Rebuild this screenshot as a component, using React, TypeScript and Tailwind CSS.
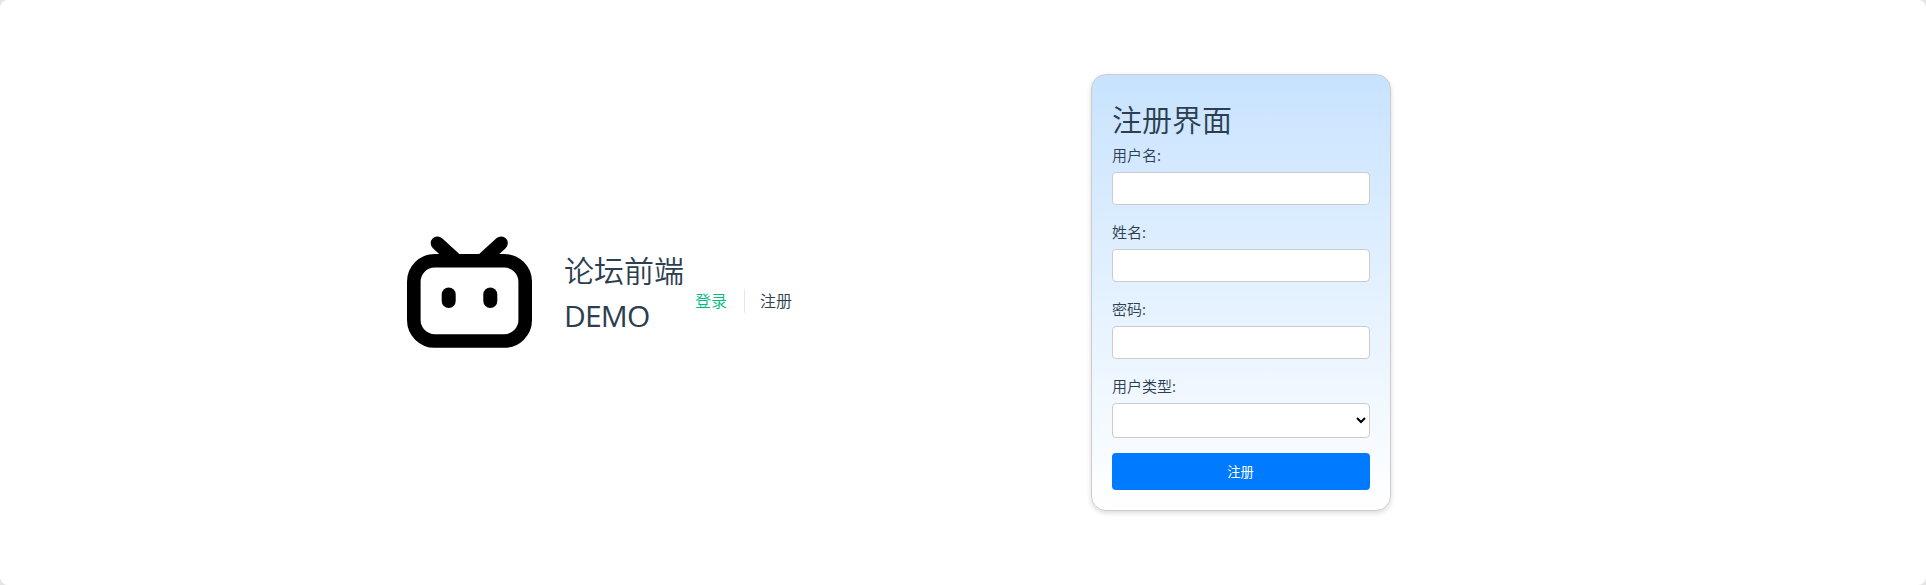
import { ReactNode } from "react";

function Logo() {
  return (
    <svg width="125" height="112" viewBox="0 0 125 112" fill="none" className="-mt-px" aria-hidden="true">
      <path
        d="M30.5 7.200 47.200 22.600M94 7.200 77.300 22.600"
        stroke="#000"
        strokeWidth="13.6"
        strokeLinecap="round"
      />
      <rect x="6.800" y="24.700" width="111.400" height="80.300" rx="21" stroke="#000" strokeWidth="13.600" />
      <rect x="34.700" y="51.500" width="14" height="20.500" rx="7" fill="#000" />
      <rect x="76.300" y="51.500" width="14" height="20.500" rx="7" fill="#000" />
    </svg>
  );
}

function Field({ label, children }: { label: string; children: ReactNode }) {
  return (
    <div className="mb-[15px]">
      <label className="mb-[5px] block h-6 text-[15px] leading-6">
        {label}
        <span className="font-normal">:</span>
      </label>
      {children}
    </div>
  );
}

function TextInput({ type = "text" }: { type?: string }) {
  return (
    <input
      type={type}
      className="block h-[33px] w-full rounded border border-[#cccccc] bg-white px-2 text-[13.33px] outline-none"
    />
  );
}

export default function App() {
  return (
    <div className="bg-[#e4e4e4]">
      <div className="flex h-[585px] w-full items-center overflow-hidden rounded-[8px] bg-white font-['Open_Sans','Noto_Sans_CJK_SC',sans-serif] font-[350] text-[#2c3e50]">
        <header className="ml-[407px] flex w-[684px] items-center">
          <Logo />
          <h1 className="ml-8 w-[121px] text-[30px] leading-[45px] font-[350]">
            论坛前端
            <br />
            <span className="font-normal tracking-[-0.8px]">DEMO</span>
          </h1>
          <nav className="mt-[17px] flex items-center text-base leading-6">
            <a className="pr-[17px] pl-[10px] text-[#00bd7e]">登录</a>
            <a className="border-l border-[#3c3c3c1f] px-[15px]">注册</a>
          </nav>
        </header>
        <form className="h-[437px] w-[300px] rounded-[15px] border border-[#cccccc] bg-linear-to-b from-[#c8e3ff] to-white p-5 shadow-[0_2px_5px_rgba(0,0,0,0.15)]">
          <h2 className="h-12 pt-px text-[30px] leading-[48px] font-[350]">注册界面</h2>
          <Field label="用户名">
            <TextInput />
          </Field>
          <Field label="姓名">
            <TextInput />
          </Field>
          <Field label="密码">
            <TextInput type="password" />
          </Field>
          <Field label="用户类型">
            <select className="block h-[35px] w-full rounded border border-[#cccccc] bg-white text-[13.33px] text-black outline-none" />
          </Field>
          <button
            type="button"
            className="block h-[37px] w-full rounded bg-[#007bff] pt-px pr-px text-[13.33px] leading-[36px] font-normal text-white"
          >
            注册
          </button>
        </form>
      </div>
    </div>
  );
}
